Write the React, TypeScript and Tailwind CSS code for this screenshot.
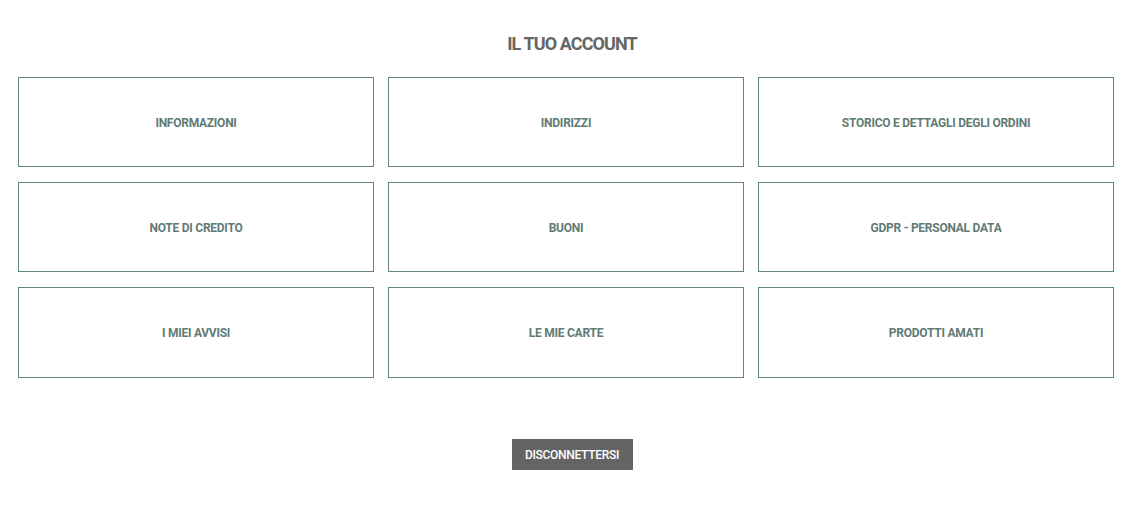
const links = [
  "Informazioni",
  "Indirizzi",
  "Storico e dettagli degli ordini",
  "Note di credito",
  "Buoni",
  "GDPR - Personal data",
  "I miei avvisi",
  "Le mie carte",
  "Prodotti amati",
];

export default function App() {
  return (
    <div className="min-h-[520px] bg-white font-['Roboto',sans-serif]">
      <header className="flex justify-center pt-[33px] pl-[7px]">
        <h1 className="text-[18px] leading-[22px] font-bold uppercase tracking-[-0.9px] text-[#666666]">
          Il tuo account
        </h1>
      </header>

      <div className="grid grid-cols-3 gap-x-[14px] gap-y-[15px] pl-[18px] pr-[23px] pt-[22px]">
        {links.map((label) => (
          <a
            key={label}
            href="#"
            className="flex h-[90px] items-center justify-center border border-[#5f8678] pt-[1px] text-[12px] font-bold uppercase tracking-[-0.25px] text-[#5f7b74] last:h-[91px] [&:nth-child(7)]:h-[91px] [&:nth-child(8)]:h-[91px]"
          >
            {label}
          </a>
        ))}
      </div>

      <div className="flex justify-center pt-[61px] pl-[7px]">
        <button className="box-border h-[31px] w-[121px] bg-[#646464] pt-[1px] text-[12px] font-medium uppercase tracking-[-0.3px] text-white">
          Disconnettersi
        </button>
      </div>
    </div>
  );
}
